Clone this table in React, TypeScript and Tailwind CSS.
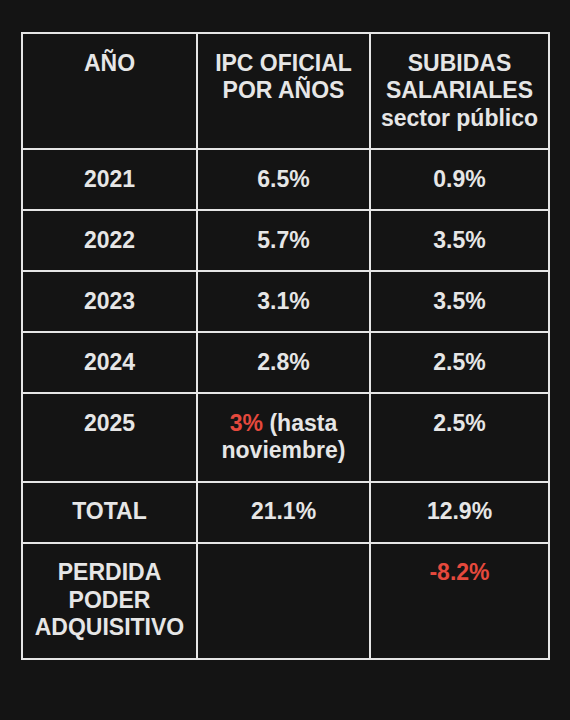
const rows: { year: string; ipc: React.ReactNode; sub: string }[] = [
  { year: "2021", ipc: "6.5%", sub: "0.9%" },
  { year: "2022", ipc: "5.7%", sub: "3.5%" },
  { year: "2023", ipc: "3.1%", sub: "3.5%" },
  { year: "2024", ipc: "2.8%", sub: "2.5%" },
  {
    year: "2025",
    ipc: (
      <>
        <span className="text-[#e5493d]">3%</span> (hasta
        <br />
        noviembre)
      </>
    ),
    sub: "2.5%",
  },
  { year: "TOTAL", ipc: "21.1%", sub: "12.9%" },
];

const cell = "border-2 border-[#e6e6e6] px-2 py-[15.75px] text-center align-top";

const App = () => {
  return (
    <div className="min-h-[720px] w-full bg-[#141414] pt-8 font-['Liberation_Sans',Arial,sans-serif]">
      <table className="ml-[21px] w-[527px] table-fixed border-collapse text-[23px] font-bold leading-[27.5px] text-[#e6e6e6]">
        <colgroup>
          <col className="w-[175px]" />
          <col className="w-[173px]" />
          <col className="w-[179px]" />
        </colgroup>
        <thead>
          <tr>
            <th className={cell}>AÑO</th>
            <th className={cell}>
              IPC OFICIAL
              <br />
              POR AÑOS
            </th>
            <th className={cell}>
              SUBIDAS
              <br />
              SALARIALES
              <br />
              sector público
            </th>
          </tr>
        </thead>
        <tbody>
          {rows.map((r) => (
            <tr key={r.year}>
              <td className={cell}>{r.year}</td>
              <td className={cell}>{r.ipc}</td>
              <td className={cell}>{r.sub}</td>
            </tr>
          ))}
          <tr>
            <td className={cell}>
              PERDIDA
              <br />
              PODER
              <br />
              ADQUISITIVO
            </td>
            <td className={cell}></td>
            <td className={`${cell} text-[#e5493d]`}>-8.2%</td>
          </tr>
        </tbody>
      </table>
    </div>
  );
};

export default App;
